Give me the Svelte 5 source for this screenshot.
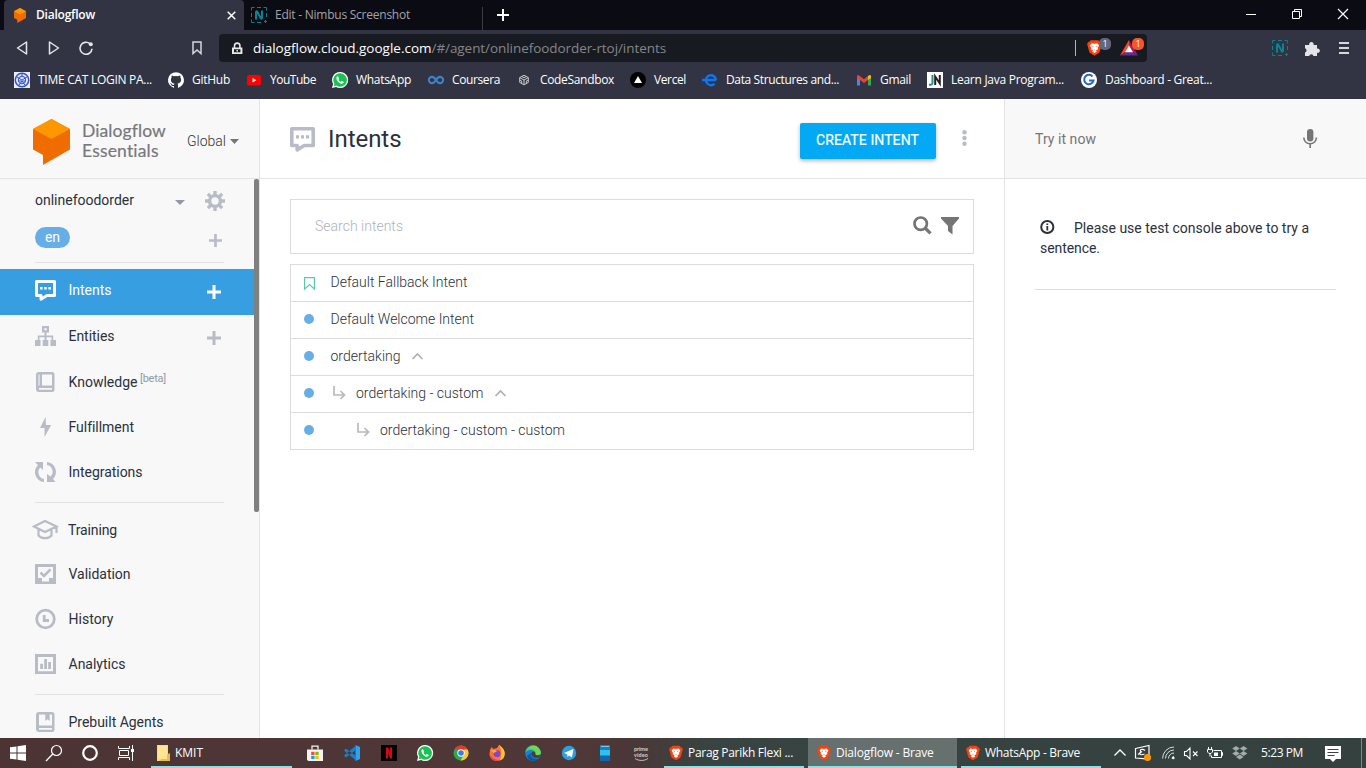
<script>
  // Spreads or tightens the letters so a label takes the given width in pixels.
  function fit(node, width) {
    const natural = node.getBoundingClientRect().width;
    const count = [...node.textContent].length;
    node.style.letterSpacing = ((width - natural) / count).toFixed(3) + 'px';
  }

  const lion =
    '<path d="M4 .3h8l1.700 1.800 1.200 0 1 2.500-.6 1.400-1.600 6.200c-.3.9-.8 1.400-1.500 1.900L8 16.800l-4.200-2.700c-.7-.5-1.200-1-1.500-1.900L.700 6 .1 4.600l1-2.500h1.200z" fill="#f9420f"/><path d="M5 3.400l3 .5 3-.5 2 2.300-1.500 2.600.3 1.500-2.300 1.300 1 1L8 13.900l-2.500-1.800 1-1-2.300-1.300.3-1.500L3 5.700z" fill="#fff"/><path d="M5 6.300l1.900.5-.4.9zM11 6.300l-1.900.5.4.9zM7 10.300h2L8 11.200z" fill="#f9420f"/>';
  const phone =
    '<path d="M8 0a8 8 0 0 0-6.900 12L0 16l4.100-1.100A8 8 0 1 0 8 0z" fill="#fff"/><path d="M8 1.300a6.700 6.700 0 0 0-5.600 10.300L1.800 14.200l2.600-.7A6.700 6.700 0 1 0 8 1.300z" fill="#19c351"/><path d="M5.700 4.200c-.5 0-1.300.7-1.300 1.700 0 2.700 3.200 5.800 5.500 5.800 1 0 1.900-.8 1.900-1.600 0-.5-1.700-1.200-2-1.200-.4 0-.7 1-1 1-.7 0-2.300-1.500-2.300-2.100 0-.3.600-.5.600-.9 0-.3-.6-2.200-.9-2.500z" fill="#fff"/>';
  const nimbus =
    '<path d="M.5 3.500v-3h3M6 .5h4M12.500.5h3v3M15.500 6v4M.5 6v4M.5 12.500v3h3M6 15.500h4M13 14.500h3M14.500 13v3" fill="none" stroke="#0c7f8d"/><path d="M5 12.500V5.200c0-1.200.9-1.400 1.400-.3L9.600 11c.5 1 1.400.8 1.400-.4V3.500" fill="none" stroke="#0a8493" stroke-width="2"/>';
  const bubble =
    '<path d="M1.500 1.500h18v14h-7.500L6 19.200V15.500H1.500z" fill="none" stroke="currentColor" stroke-width="3" stroke-linejoin="round"/><path d="M5 7h2.600v2.600H5zM9.200 7h2.600v2.600H9.200zM13.400 7H16v2.600h-2.600z" fill="currentColor"/>';
  const cube =
    '<path d="M0 10L18.500 0 37 10v20.500L10 46V36L0 30.500z" fill="#ef6c00"/><path d="M0 10L18.500 0 37 10 18.500 20z" fill="#ff9800"/>';

  const bookmarks = [
    { t: 'TIME CAT LOGIN PA...', cell: 154, w: 114, i: '<path d="M0 0h16v16H0z" fill="#e8ecfb"/><circle cx="8" cy="8" r="6.700" fill="none" stroke="#3554c4" stroke-width="1.500"/><circle cx="8" cy="8" r="3.600" fill="none" stroke="#4763d2" stroke-width="1.200"/><path d="M3 5l5 3 5-3M5 13l3-4 3 4M4 9h8M8 1v3" fill="none" stroke="#3554c4"/>' },
    { t: 'GitHub', cell: 78, w: 38, i: '<path fill="#fff" d="M8 .2a8 8 0 0 0-2.500 15.600c.4.1.5-.2.500-.4v-1.500c-2.200.5-2.700-1-2.700-1-.4-.9-.9-1.200-.9-1.200-.7-.5.1-.5.1-.5.8.1 1.200.8 1.200.8.700 1.300 1.900.9 2.300.7.1-.5.3-.9.500-1.100-1.800-.2-3.600-.9-3.600-4 0-.9.300-1.600.8-2.100-.1-.2-.4-1 .1-2.100 0 0 .7-.2 2.200.8a7.500 7.500 0 0 1 4 0c1.500-1 2.200-.8 2.200-.8.5 1.100.2 1.900.1 2.100.5.6.8 1.300.8 2.100 0 3.100-1.900 3.800-3.700 4 .3.300.6.800.6 1.500v2.300c0 .2.100.5.500.4A8 8 0 0 0 8 .2z"/>' },
    { t: 'YouTube', cell: 86, w: 46, i: '<rect x="1" y="3" width="14" height="10.500" rx="2" fill="#f00"/><path d="M6.500 6v4.500L10.300 8.200z" fill="#fff"/>' },
    { t: 'WhatsApp', cell: 96, w: 55, i: phone },
    { t: 'Coursera', cell: 88, w: 48, i: '<path d="M8 8C6.500 5.500 5.500 4.900 4 4.900a3 3 0 1 0 0 6.200c1.500 0 2.500-.6 4-3.100 1.500-2.500 2.500-3.100 4-3.100a3 3 0 1 1 0 6.200C10.500 11.100 9.500 10.500 8 8z" fill="none" stroke="#3f80c6" stroke-width="2.100"/>' },
    { t: 'CodeSandbox', cell: 114, w: 74, i: '<path d="M8 3.200l4.300 2.400v4.800L8 12.900l-4.300-2.500V5.600zM8 8v5M8 8l4.300-2.400M8 8L3.700 5.600M5.700 4.500L8 5.700l2.300-1.200M3.700 8l2 1.100v2.400M12.300 8l-2 1.100v2.400" fill="none" stroke="#c9c9cb" stroke-width="1"/>' },
    { t: 'Vercel', cell: 72, w: 32, i: '<circle cx="8" cy="8" r="8" fill="#000"/><path d="M8 4l4 7H4z" fill="#fff"/>' },
    { t: 'Data Structures and...', cell: 154, w: 113, i: '<path d="M0 8h14.200M14 8a5 5 0 1 0-1.500 3.800" fill="none" stroke="#0877f5" stroke-width="2.400"/>' },
    { t: 'Gmail', cell: 71, w: 31, i: '<path d="M1 13.500V4l3 2v7.500z" fill="#4285f4"/><path d="M12 13.500V6l3-2v9.500z" fill="#34a853"/><path d="M1 3.500L2.500 3 8 7.200 12 4v4L8 11 1 5.800z" fill="#ea4335"/><path d="M12 4l1.500-1L15 3.500v2.300L12 8z" fill="#fbbc04"/>' },
    { t: 'Learn Java Program...', cell: 154, w: 113, i: '<path d="M0 0h16v16H0z" fill="#fff"/><path d="M5.500 3v7.500c0 2-.8 2.500-3.500 2" fill="none" stroke="#2b8c8c" stroke-width="2"/><path d="M8.200 13V4.500l4.600 7V3" fill="none" stroke="#222" stroke-width="2"/>' },
    { t: 'Dashboard - Great...', cell: 140, w: 107, i: '<circle cx="8" cy="8" r="8" fill="#fff"/><path d="M11.500 4.500a4.700 4.700 0 1 0 1 4H8" fill="none" stroke="#2766c8" stroke-width="2"/>' }
  ];

  const nav = [
    [
      { t: 'Intents', w: 43, h: 46, active: true, plus: true, i: bubble },
      { t: 'Entities', w: 46, h: 46, plus: true, i: '<path d="M7 0h7v6.500H7zM9.300 2.200v2.100h2.400V2.200zM9.500 6.500h2V9.500h6.700v4.500H21V20h-5.500v-6h1v-2.800h-5V14h1.800v6H7.700v-6h1.800v-2.800h-5V14h1V20H0v-6h2.800V9.500h6.700z" fill="currentColor" fill-rule="evenodd"/>' },
      { t: 'Knowledge', w: 69, h: 45, beta: true, i: '<path d="M4 0h13a2.500 2.500 0 0 1 2.500 2.500v15A2.500 2.500 0 0 1 17 20H4a3 3 0 0 1-3-3V3a3 3 0 0 1 3-3zM3.500 2.500V13.500H4.500V2.500zM7 2.500V13.500H17V2.500zM4 16v1.800h13V16z" fill="currentColor" fill-rule="evenodd"/>' },
      { t: 'Fulfillment', w: 65, h: 45, i: '<path d="M10.500 0L5 11h4.500v9L16.200 8H11z" fill="currentColor"/>' },
      { t: 'Integrations', w: 74, h: 45, i: '<path d="M0 0h8v8L5.300 5.600A6.800 6.800 0 0 0 9 17v3A10 10 0 0 1 3 3zM12 0a10 10 0 0 1 6 17l2.500 3H12v-8l3.500 2.600A6.800 6.800 0 0 0 12 3z" fill="currentColor"/>' }
    ],
    [
      { t: 'Training', w: 49, h: 45, wide: true, i: '<path d="M2 6.500L13 1l11.500 5.500L13 12zM6.500 9v6.500c3 3.600 10 3.600 13 0V9M24.500 6.500V13" fill="none" stroke="currentColor" stroke-width="2.200"/>' },
      { t: 'Validation', w: 62, h: 45, i: '<path d="M0 0h21v20H0zM3 3v11h4v3.500h7V14h4V3z" fill="currentColor" fill-rule="evenodd"/><path d="M5.500 8.500L9 12l6.500-6.700" fill="none" stroke="currentColor" stroke-width="2.600"/>' },
      { t: 'History', w: 45, h: 45, i: '<circle cx="10.500" cy="10" r="8.800" fill="none" stroke="currentColor" stroke-width="2.800"/><path d="M9.200 6v5.500H14" fill="none" stroke="currentColor" stroke-width="2.800"/>' },
      { t: 'Analytics', w: 57, h: 45, i: '<path d="M0 0h21v20H0zM3 3v14.300h15V3z" fill="currentColor" fill-rule="evenodd"/><path d="M5.200 9.800H8V15H5.200zM9.200 5H12v10H9.200zM13.200 8H16v7h-2.800z" fill="currentColor"/>' }
    ],
    [
      { t: 'Prebuilt Agents', w: 95, h: 45, i: '<path d="M4 0h13a2.500 2.500 0 0 1 2.500 2.500v15A2.500 2.500 0 0 1 17 20H4a3 3 0 0 1-3-3V3a3 3 0 0 1 3-3zM4 2.500V13.500H17V2.500h-2.300V9L12.500 7.300 10.300 9V2.500zM4 16v1.800h13V16z" fill="currentColor" fill-rule="evenodd"/>' }
    ]
  ];

  const intents = [
    { t: 'Default Fallback Intent', w: 137, depth: 0, fallback: true },
    { t: 'Default Welcome Intent', w: 143.5, depth: 0 },
    { t: 'ordertaking', w: 70, depth: 0, open: true },
    { t: 'ordertaking - custom', w: 127.5, depth: 1, open: true },
    { t: 'ordertaking - custom - custom', w: 185, depth: 2 }
  ];

  const launchers = [
    { cell: 36, i: '<path d="M0 4.500h16V16H1.500L0 15z" fill="#f3f3f3"/><path d="M5 4.500V1.200h6v3.300" fill="none" stroke="#f3f3f3" stroke-width="1.300"/><path d="M4.200 6.800h3.300V10H4.200z" fill="#f25022"/><path d="M8.300 6.800h3.300V10H8.300z" fill="#7fba00"/><path d="M4.200 10.800h3.300V14H4.200z" fill="#00a4ef"/><path d="M8.300 10.800h3.300V14H8.300z" fill="#ffb900"/>' },
    { cell: 37, i: '<path d="M11.500 0L16 2v12l-4.500 2z" fill="#2aa3f0"/><path d="M12 .5L0 10.500 1.800 12.500 12 5zM12 15.500L0 5.500 1.800 3.500 12 11z" fill="#1483cf"/>' },
    { cell: 37, i: '<path d="M0 0h16v16H0z" fill="#050404"/><path d="M5 2.500h2.200L9 8V2.500h2v11H9L7 8v5.500H5z" fill="#d40a15"/>' },
    { cell: 36, i: phone },
    { cell: 36, i: '<circle cx="8" cy="8" r="7.500" fill="#2da94f"/><path d="M1.500 4.200A7.500 7.500 0 0 1 14.600 4.500H8z" fill="#e33b2e"/><path d="M14.600 4.500A7.500 7.500 0 0 1 7.500 15.500L11 9.500V4.500z" fill="#fcc934"/><circle cx="8" cy="8" r="3.700" fill="#fff"/><circle cx="8" cy="8" r="2.800" fill="#3b7de8"/>' },
    { cell: 36, i: '<path d="M1 5l1.500-3 2 2L8 3l2-3c3 2 6 5 5.700 9A7.500 7.500 0 0 1 8 16C3.500 16 .5 12.500.500 9z" fill="#ff7139"/><path d="M10 0c3 2 6 5 5.700 9a7 7 0 0 1-5 6.500C13 11 13 5 10 0z" fill="#ffcb2f"/><path d="M1 10a7.500 7.500 0 0 0 9.500 5.500C6 15 3 13 1 10z" fill="#e8306f"/><circle cx="8" cy="8.700" r="3.400" fill="#8147c9"/><path d="M2 5.500c2-1 4-.5 6 .5-1 1.500-2.500 1-3 2.300z" fill="#ffb131"/>' },
    { cell: 36, i: '<circle cx="8" cy="8" r="7.900" fill="#1784cf"/><path d="M.3 7A7.900 7.900 0 0 1 15.900 7.500c0 3-4.600 3.500-5.700 1.800C11.800 6 6 2.600.3 7z" fill="#43c984"/><path d="M3 3.500C6 0 11-.2 13.500 3c2 2.500 2.400 4 2.300 5.500-1 2-3 2-5 1.500C12 5.500 8 3.500 3 3.500z" fill="#70d94e"/><path d="M6 8c-1.500 4 3 7 7.500 5.500C11 17 4 17 2 11z" fill="#0c56a3"/><path d="M6.200 8.200C8 6 10.800 6.500 10.200 9.300c1.100 1.700 4.200 1.200 5.300-.3L14 12.500c-3 1-7.500 0-7.800-4.300z" fill="#51383a"/>' },
    { cell: 36, i: '<circle cx="8" cy="8" r="7.200" fill="#2fa0d8"/><path d="M3 8l9.500-4-1.600 8.500L8 10.500 6.500 12l-.3-2.800z" fill="#fff"/>' },
    { cell: 36, i: '<path d="M3 0h10v6H3z" fill="#0c83c7"/><path d="M3 5h10v6H3z" fill="#2fc0f0"/><path d="M3 10.500h10V16H3z" fill="#1068aa"/><path d="M4 1.500h8" stroke="#fff" stroke-width=".5"/>' }
  ];

  const windows = [
    { t: 'Parag Parikh Flexi ...', w: 105 },
    { t: 'Dialogflow - Brave', w: 97.5, on: true },
    { t: 'WhatsApp - Brave', w: 95 }
  ];
</script>

{#snippet svg(inner, w, h, box)}
  <svg width={w} height={h} viewBox={box ?? `0 0 ${w} ${h}`}>{@html inner}</svg>
{/snippet}

<div class="screen">
  <div class="tabs">
    <div class="tab on">
      {@render svg(cube, 12, 15, '0 0 37 46')}
      <b use:fit={59}>Dialogflow</b>
      <span class="grow"></span>
      {@render svg('<path d="M.7.700l7.600 7.600M8.300.700L.7 8.300" stroke="#fff" stroke-width="1.500"/>', 9, 9)}
    </div>
    <div class="tab off">
      {@render svg(nimbus, 16, 16)}
      <span use:fit={135}>Edit - Nimbus Screenshot</span>
    </div>
    <div class="newtab">{@render svg('<path d="M6 0v12M0 6h12" stroke="#fff" stroke-width="2"/>', 12, 12)}</div>
    <span class="grow"></span>
    <div class="wincontrols">
      {@render svg('<path d="M0 5.500h10" stroke="#fff"/>', 10, 10)}
      {@render svg('<path d="M.5 2.500h7v7h-7zM2.500 2.500v-2h7v7h-2" fill="none" stroke="#fff"/>', 10, 10)}
      {@render svg('<path d="M0 0l10 10M10 0L0 10" stroke="#fff" stroke-width="1.200"/>', 10, 10)}
    </div>
  </div>

  <div class="toolbar">
    <div class="navbtns">
      {@render svg('<path d="M10.500 1v12L1.500 7z" fill="none" stroke="#e6e6ea" stroke-width="1.500" stroke-linejoin="round"/>', 12, 14)}
      {@render svg('<path d="M1.500 1v12l9-6z" fill="none" stroke="#e6e6ea" stroke-width="1.500" stroke-linejoin="round"/>', 12, 14)}
      {@render svg('<path d="M11 2.800A6 6 0 1 0 13 7.800" fill="none" stroke="#e6e6ea" stroke-width="1.600"/><circle cx="11.800" cy="3.300" r="2" fill="#e6e6ea"/>', 15, 14)}
    </div>
    <div class="mark">{@render svg('<path d="M1 1h8v11.500L5 9l-4 3.500z" fill="none" stroke="#d6d6dc" stroke-width="1.500"/>', 10, 14)}</div>
    <div class="address">
      {@render svg('<path d="M2.500 6V3.800a2.700 2.700 0 0 1 5.400 0V6" fill="none" stroke="#e8e8e8" stroke-width="1.600"/><path d="M0 5.500h10.400V12H0zM2 7.300v3h6.400v-3z" fill="#e8e8e8" fill-rule="evenodd"/><path d="M4.400 8h1.600v1.600H4.400z" fill="#e8e8e8"/>', 11, 12)}
      <span class="url"><span class="host" use:fit={178.5}>dialogflow.cloud.google.com</span><span use:fit={234.5}>/#/agent/onlinefoodorder-rtoj/intents</span></span>
      <span class="grow"></span>
      <i class="bar"></i>
      <span class="shield">{@render svg(lion, 15, 18, '0 0 16 17')}<em>1</em></span>
      <span class="rewards">{@render svg('<path d="M9 0L0 15.500 9 10z" fill="#ff4724"/><path d="M9 0l9 15.500L9 10z" fill="#9e1f63"/><path d="M0 15.500h18L9 10z" fill="#662d91"/><path d="M9 5.500l4 6.800H5z" fill="#fff"/>', 18, 16)}<em>1</em></span>
    </div>
    <div class="ext">
      {@render svg(nimbus, 16, 16)}
      {@render svg('<path d="M0 4h4.200a2.300 2.300 0 1 1 4.400 0H12v3.600a2.200 2.200 0 1 1 0 4.200V15H8.500a2.200 2.200 0 0 0-4.300 0H0v-3.500a2.200 2.200 0 0 0 0-4.200z" fill="#e4e4e8"/>', 15, 15)}
      {@render svg('<path d="M0 1h10M0 6h10M0 11h10" stroke="#d8d8dd" stroke-width="2"/>', 10, 12)}
    </div>
  </div>

  <div class="bookmarks">
    {#each bookmarks as b}
      <div class="bm" style:width="{b.cell}px">{@render svg(b.i, 16, 16)}<span use:fit={b.w}>{b.t}</span></div>
    {/each}
  </div>

  <div class="page">
    <aside>
      <header class="brand">
        {@render svg(cube, 37, 46)}
        <div class="brandname"><div use:fit={84}>Dialogflow</div><div use:fit={77}>Essentials</div></div>
        <span class="region"><span use:fit={39}>Global</span>{@render svg('<path d="M0 0h9L4.500 5z" fill="#757575"/>', 9, 5)}</span>
      </header>
      <div class="sidebody">
        <div class="menu">
          <div class="agent">
            <span use:fit={99}>onlinefoodorder</span>
            <span class="grow"></span>
            {@render svg('<path d="M0 0h10L5 5z" fill="#9298a6"/>', 10, 5)}
            <span class="gear">{@render svg('<circle cx="10" cy="10" r="5.400" fill="none" stroke="#b7bcc7" stroke-width="3.400"/><g stroke="#b7bcc7" stroke-width="3.300"><path d="M10 0v4M10 16v4M0 10h4M16 10h4M2.900 2.900l2.900 2.900M14.200 14.200l2.900 2.900M17.100 2.900l-2.900 2.900M5.800 14.200l-2.900 2.900"/></g>', 20, 20)}</span>
          </div>
          <div class="lang">
            <span class="pill">en</span>
            {@render svg('<path d="M6.500 0v13M0 6.500h13" stroke="#b7bcc7" stroke-width="2.700"/>', 13, 13)}
          </div>
          {#each nav as group, g}
            <hr />
            {#each group as n}
              <div class="nav" class:active={n.active} class:low={g > 0} class:first={n.wide} style:height="{n.h}px">
                <span class="ico" class:wide={n.wide} class:top={n.plus}>{@render svg(n.i, n.wide ? 27 : 21, 21)}</span>
                <span use:fit={n.w}>{n.t}</span>
                {#if n.beta}<sup use:fit={26}>[beta]</sup>{/if}
                {#if n.plus}
                  <span class="grow"></span>
                  <span class="plus">{@render svg('<path d="M7 0v14M0 7h14" stroke="currentColor" stroke-width="3"/>', 14, 14)}</span>
                {/if}
              </div>
            {/each}
          {/each}
        </div>
        <div class="scroll"></div>
      </div>
    </aside>

    <main>
      <header class="head">
        {@render svg(bubble, 25, 25, '0 0 21 21')}
        <h1 use:fit={73.5}>Intents</h1>
        <span class="grow"></span>
        <button><span use:fit={103}>CREATE INTENT</span></button>
        {@render svg('<circle cx="2.500" cy="2.300" r="2.200"/><circle cx="2.500" cy="8" r="2.200"/><circle cx="2.500" cy="13.700" r="2.200"/>', 5, 16)}
      </header>
      <div class="content">
        <div class="search">
          <span use:fit={88}>Search intents</span>
          <span class="grow"></span>
          {@render svg('<circle cx="7.700" cy="7.700" r="6.200" fill="none" stroke="#757575" stroke-width="2.700"/><path d="M12 12l5.500 5.300" stroke="#757575" stroke-width="3.200"/>', 19, 19)}
          {@render svg('<path d="M0 0h18v1.500L11.500 9v8.500L7 14V9L0 1.500z" fill="#757575"/>', 18, 18)}
        </div>
        <div class="list">
          {#each intents as r}
            <div class="row">
              <span class="state">
                {#if r.fallback}
                  {@render svg('<path d="M.6.600h9.800v11.500L5.500 7.500.600 12.100z" fill="none" stroke="#57cbb0" stroke-width="1.200"/>', 11, 13)}
                {:else}<i></i>{/if}
              </span>
              {#if r.depth}
                <span class="turn" class:deep={r.depth === 2}>{@render svg('<path d="M1 0v9h10M7.500 5l4 4-4 4" fill="none" stroke="#b9b9b9" stroke-width="1.700"/>', 13, 14)}</span>
              {/if}
              <span use:fit={r.w}>{r.t}</span>
              {#if r.open}<span class="up">{@render svg('<path d="M.5 6L5.500 1l5 5" fill="none" stroke="#b0b0b0" stroke-width="1.700"/>', 11, 7)}</span>{/if}
            </div>
          {/each}
        </div>
      </div>
    </main>

    <section class="console">
      <header class="try">
        <span use:fit={61}>Try it now</span>
        {@render svg('<rect x="4" y="0" width="6.400" height="12.500" rx="3.200" fill="#757575"/><path d="M.8 8.500a6.300 6.300 0 0 0 12.600 0M7.200 14.500V19" fill="none" stroke="#757575" stroke-width="1.600"/>', 15, 19)}
      </header>
      <div class="hint">
        <div class="line">{@render svg('<circle cx="7.300" cy="7" r="6.100" fill="none" stroke="#2b303b" stroke-width="2"/><path d="M6.400 6h1.800v4.500H6.400zM6.400 3.500h1.800V5H6.400z" fill="#2b303b"/>', 15, 15)}<span use:fit={235}>Please use test console above to try a</span></div>
        <div class="line"><span use:fit={60}>sentence.</span></div>
      </div>
    </section>
  </div>

  <div class="taskbar">
    <div class="cell sys">{@render svg('<path d="M0 2.300L6.500 1.400V7.500H0zM7.500 1.200L16 0v7.500H7.500zM0 8.500h6.500v6.100L0 13.700zM7.500 8.500H16V16L7.500 14.800z" fill="#fff"/>', 16, 16)}</div>
    <div class="cell sys">{@render svg('<circle cx="10.500" cy="5.500" r="5" fill="none" stroke="#fff" stroke-width="1.200"/><path d="M6.800 9L0 16" stroke="#fff" stroke-width="1.300"/>', 16, 16)}</div>
    <div class="cell sys">{@render svg('<circle cx="8" cy="8" r="6.800" fill="none" stroke="#fff" stroke-width="2.200"/>', 16, 16)}</div>
    <div class="cell sys">{@render svg('<path d="M.5 1v2.500h11V1M.5 15v-2.500h11V15M1.500 5.500h9v5h-9zM14.500 0v16" fill="none" stroke="#fff"/><path d="M13 4h3v3h-3z" fill="#fff"/>', 16, 16)}</div>
    <div class="task folder">{@render svg('<path d="M0 0h11v16H0z" fill="#fbdc78"/><path d="M11 9l2-1v8H2z" fill="#e9bd48"/><path d="M1 1h9v13H1z" fill="#ffe493"/>', 13, 16)}<span use:fit={28}>KMIT</span></div>
    <div class="launch">
      {#each launchers as l}<div class="cell" style:width="{l.cell}px">{@render svg(l.i, 16, 16)}</div>{/each}
      <div class="cell prime"><small use:fit={14}>prime</small><small use:fit={14}>video</small>{@render svg('<path d="M0 .5c4 2.600 9 2.600 13 0" fill="none" stroke="#c6c1c1"/>', 13, 3)}</div>
    </div>
    {#each windows as w}
      <div class="task win" class:on={w.on}>{@render svg(lion, 14, 16, '0 0 16 17')}<span use:fit={w.w}>{w.t}</span></div>
    {/each}
    <div class="tray">
      {@render svg('<path d="M.5 6.500L6 1l5.500 5.500" fill="none" stroke="#fff" stroke-width="1.300"/>', 12, 8)}
      {@render svg('<path d="M.5 3.500L14 .5v13.500l-13.500-1zM10 5.500C7 3 4 5 6 7c-3 1-1 4 3.500 2M3 9.500l4-3" fill="none" stroke="#fff" stroke-width="1.200"/><circle cx="12.500" cy="12.500" r="3.500" fill="#ff9800"/>', 16, 16)}
      {@render svg('<path d="M10 12.500a2 2 0 0 1 2-2M6.500 12.500A5.500 5.500 0 0 1 12 7M3.500 12.500A8.500 8.500 0 0 1 12 4M.6 12.500A11.500 11.500 0 0 1 12 1" fill="none" stroke="#d9dcdb" stroke-width="1"/><circle cx="11.300" cy="12" r="1.300" fill="#fff"/>', 13, 14)}
      {@render svg('<path d="M.5 4.500h2L6 1v11L2.500 8.500h-2zM9 4.500l4.500 4.500M13.500 4.500L9 9" fill="none" stroke="#fff" stroke-width="1.100"/>', 14, 13)}
      {@render svg('<path d="M6.500 3.500h8v7h-10v-2M14.500 5.500h1v3h-1M1.500 0v2.500M4.500 0v2.500M.5 2.500h5v2.500L4 6.500H2L.5 5zM3 6.500v3" fill="none" stroke="#fff" stroke-width="1"/><path d="M7 5.500h4v3.500H7z" fill="#fff"/>', 16, 13)}
      {@render svg('<path d="M4 0l3.800 2.500L4 5 .2 2.500zM11.600 0l3.800 2.500L11.600 5 7.800 2.500zM4 5l3.800 2.500L4 10 .2 7.500zM11.600 5l3.800 2.500-3.800 2.500-3.800-2.500zM7.800 8.500l3.800 2.500-3.800 2.500L4 11z" fill="#a4aaa9"/>', 16, 14)}
      <span class="clock" use:fit={42}>5:23 PM</span>
      {@render svg('<path d="M0 0h16v13h-5l-3 3-3-3H0z" fill="#fff"/><path d="M2.500 3.500h11M2.500 6.500h11M2.500 9.500h7" stroke="#3a4543"/>', 16, 16)}
      <i class="peek"></i>
    </div>
  </div>
</div>

<style>
  :global(body) { margin: 0; overflow: hidden; }
  .screen { width: 1366px; height: 768px; display: flex; flex-direction: column; overflow: hidden; background: #fff; font: 14px/20px Roboto, sans-serif; color: #2b303b; }
  .screen * { box-sizing: border-box; }
  .screen span, .screen b, .screen sup { white-space: nowrap; }
  svg { display: block; flex: none; overflow: visible; }
  .grow { flex: 1; }
  .tabs, .toolbar, .bookmarks, .taskbar { display: flex; flex: none; align-items: center; font-family: "Open Sans", "Noto Sans", sans-serif; font-size: 12px; line-height: 16px; color: #fff; }

  .tabs { height: 30px; background: #0b0b14; padding-left: 4px; }
  .tab { display: flex; align-items: center; height: 30px; }
  .tab.on { width: 240px; background: #323443; border-radius: 4px 4px 0 0; padding: 0 8px 0 10px; gap: 10px; }
  .tab.on b { font-weight: 600; }
  .tab.off { width: 239px; height: 23px; margin-top: 7px; padding: 0 0 7px 7px; gap: 8px; color: #a3a3a8; border-right: 1px solid #3c3c43; }
  .newtab { padding-left: 14px; }
  .wincontrols { display: flex; gap: 36px; padding: 0 18px 2px 0; }

  .toolbar { height: 37px; background: #323443; padding: 0 0 1px 16px; }
  .navbtns { display: flex; gap: 20px; width: 176px; }
  .navbtns svg:last-child { margin-left: -1px; }
  .mark { width: 27px; }
  .address { display: flex; align-items: center; width: 928px; height: 28px; padding: 0 6px 0 13px; border-radius: 4px; background: #181a21; }
  .url { display: flex; margin: 0 0 1px 10px; font-size: 13.500px; line-height: 18px; color: #85868b; }
  .host { color: #fff; }
  .bar { width: 1px; height: 16px; background: #b4b4b8; margin-right: 11px; }
  .shield, .rewards { position: relative; display: block; }
  .shield { width: 33px; }
  .rewards { width: 21px; }
  em { position: absolute; left: 12px; top: -1px; width: 12px; height: 12px; border-radius: 5px; background: #636779; font: 9px/12px "Open Sans", sans-serif; text-align: center; color: #fff; }
  .rewards em { left: 12px; top: -2px; background: #fb542b; }
  .ext { display: flex; align-items: center; gap: 17px; margin-left: 125px; }
  .ext svg:last-child { margin-left: 2px; }

  .bookmarks { height: 32px; background: #323443; padding: 0 0 6px 14px; }
  .bm { display: flex; gap: 8px; align-items: center; }

  .page { display: flex; height: 639px; flex: none; }
  aside { width: 260px; border-right: 1px solid #e4e4e4; background: #f8f8f8; display: flex; flex-direction: column; overflow: hidden; }
  header { display: flex; flex: none; align-items: center; height: 80px; border-bottom: 1px solid #e4e4e4; }
  .brand { padding: 5px 0 0 33px; width: 260px; }
  .brandname { width: 105px; padding-left: 12px; font: 400 17.500px/20px Lato, sans-serif; color: #77787b; -webkit-text-stroke: .2px #77787b; }
  .brandname div { width: max-content; }
  .brand svg { margin-top: 2px; }
  .region { display: flex; align-items: center; gap: 4px; margin: -1px 0 0 12px; font-weight: 300; }
  .region span { color: #333; }
  .sidebody { display: flex; flex: 1; min-height: 0; }
  .menu { width: 254px; overflow: hidden; }
  .agent { display: flex; align-items: center; height: 42px; padding: 0 29px 0 35px; }
  .agent > svg { margin-top: 4px; }
  .gear { margin: 2px 0 0 20px; }
  .lang { display: flex; align-items: center; justify-content: space-between; height: 33px; padding: 0 32px 0 35px; }
  .lang svg { margin-top: 5px; }
  .pill { width: 35px; height: 21px; border-radius: 11px; background: #67aee9; color: #fff; text-align: center; line-height: 20px; }
  hr { height: 1px; border: 0; margin: 8px 30px 6px 35px; background: #e1e1e1; }
  .nav ~ hr { margin: 6px 30px 6px 35px; }
  .nav { display: flex; align-items: center; padding: 0 33px 4px 35px; }
  .nav.active { background: #379fe1; color: #fff; }
  .nav.first { margin-bottom: -1px; }
  .ico { width: 33.500px; margin-top: 2px; color: #b7bcc7; }
  .ico.top { margin-top: 0; }
  .ico.wide { margin-left: -3px; width: 36px; }
  .active .ico, .active .plus { color: #fff; }
  .plus { color: #b7bcc7; margin-top: 4px; }
  sup { font-size: 11px; line-height: 12px; color: #9299a6; margin: -6px 0 0 2.500px; }
  .scroll { width: 5px; height: 333px; border-radius: 2px; background: #808080; }

  main { width: 744px; }
  .head { padding: 0 37px 0 30px; color: #2b303b; }
  .head > svg:first-child { color: #b7bcc7; margin-top: 1px; }
  h1 { margin: 0 0 0 13px; font-size: 24px; line-height: 30px; font-weight: 400; white-space: nowrap; }
  button { width: 136px; height: 36px; margin: 4px 26px 0 0; padding: 0 0 1px 16px; border: 0; border-radius: 2px; background: #03a9f4; box-shadow: 0 2px 4px rgba(0,0,0,.28); color: #fff; font: 400 14px/20px Roboto, sans-serif; -webkit-text-stroke: .2px #fff; text-align: left; }
  .head > svg:last-child { fill: #b7bcc7; margin-top: -1px; }
  .content { padding: 20px 30px; }
  .search { display: flex; align-items: center; height: 55px; padding: 0 14px 2px 24px; border: 1px solid #dcdcdc; color: #b0b3b8; font-weight: 300; gap: 9px; }
  .list { margin-top: 10px; border: 1px solid #dcdcdc; font-weight: 300; }
  .row { display: flex; align-items: center; height: 37px; padding: 0 13px 2px; border-bottom: 1px solid #dcdcdc; }
  .row:last-child { height: 36px; border: 0; padding-bottom: 2px; }
  .state { width: 26.500px; }
  .state svg { margin-top: 3px; }
  .state i { display: block; width: 10px; height: 10px; border-radius: 50%; background: #67aee9; }
  .turn { width: 25.500px; padding-left: 2px; }
  .turn.deep { width: 49.500px; padding-left: 26px; }
  .up { margin: 1px 0 0 11.500px; }

  .console { flex: 1; border-left: 1px solid #e4e4e4; }
  .try { justify-content: space-between; padding: 0 48px 0 30px; background: #f8f8f8; color: #757575; }
  .hint { margin: 0 30px; padding: 39px 0 31px 5px; border-bottom: 1px solid #dedede; }
  .line { display: flex; height: 20px; }
  .line svg { margin: 2px 19px 0 0; }

  .taskbar { height: 30px; background: linear-gradient(90deg, #4c3434 0, #503838 42%, #4b3737 46%, #384441 52%, #34413f 100%); }
  .cell { display: flex; width: 36px; height: 30px; align-items: center; justify-content: center; }
  .task { display: flex; align-items: center; height: 30px; border-bottom: 2px solid #85e3e3; padding: 2px 0 0 5px; }
  .folder { width: 141px; margin-left: 7px; gap: 5px; padding-left: 6px; }
  .launch { display: flex; margin: 0 5px; }
  .prime { flex-direction: column; }
  small { font: 700 5.500px/6px Roboto, sans-serif; color: #c6c1c1; }
  .win { width: 140px; gap: 5px; margin-right: 4px; }
  .win.on { width: 149px; background: #66706e; padding-left: 9px; }
  .tray { display: flex; align-items: center; margin-left: 9px; gap: 9px; }
  .tray svg:nth-of-type(3) { margin-left: 2px; }
  .clock { margin-left: 4px; }
  .clock + svg { margin: 2px 0 0 13px; }
  .peek { width: 1px; height: 30px; background: #7e8786; margin-left: 11px; }
</style>
